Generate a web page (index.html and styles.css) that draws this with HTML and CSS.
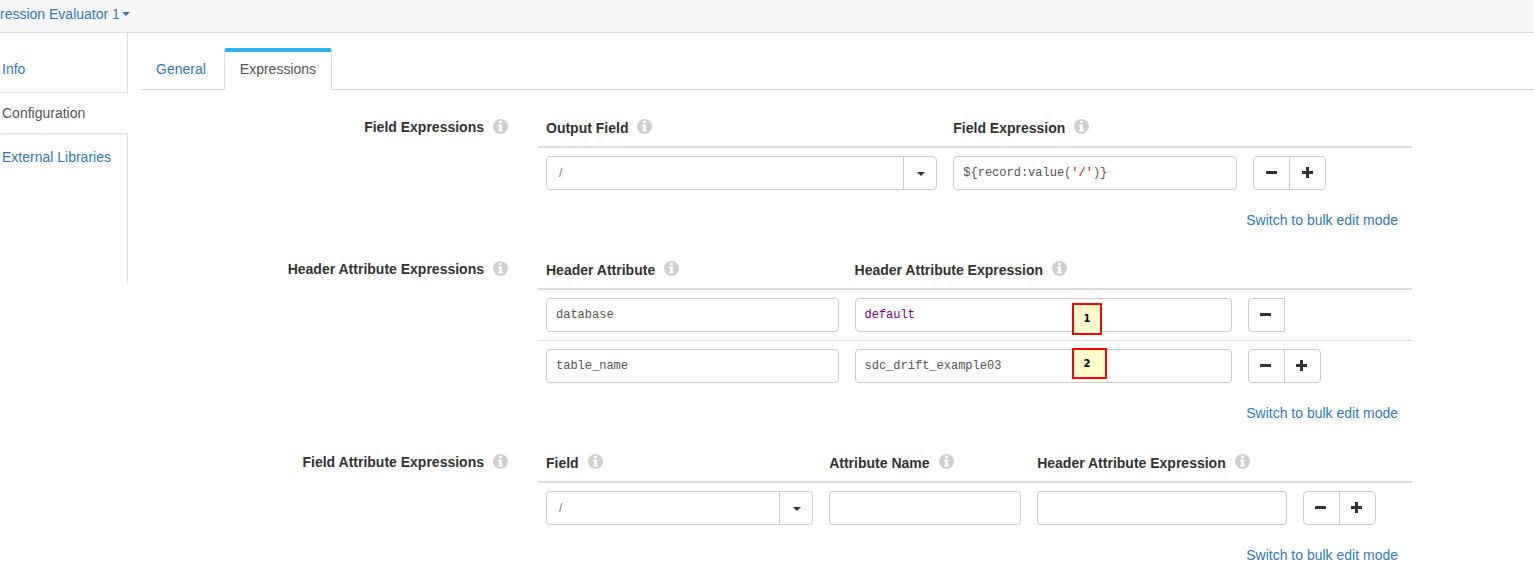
FILE: index.html
```html
<!DOCTYPE html>
<html lang="en">
<head>
<meta charset="utf-8">
<title>Expression Evaluator 1</title>
<link rel="stylesheet" href="styles.css">
</head>
<body>
<svg class="sprite" aria-hidden="true">
  <symbol id="info" viewBox="0 0 15 15">
    <circle cx="7.5" cy="7.5" r="7.5" fill="#cfcfcf"/>
    <path d="M6 1.8h2.8v2.1H6zM5.1 5.5h3.7v5.2H10v1.9H5.1v-1.9h1.2V7.4H5.1z" fill="#fff"/>
  </symbol>
  <symbol id="minus" viewBox="0 0 12 12"><rect x="0" y="4" width="11" height="3" rx=".6" fill="#333"/></symbol>
  <symbol id="plus" viewBox="0 0 12 12"><path d="M4 0h3v4h4v3H7v4H4V7H0V4h4z" fill="#333"/></symbol>
</svg>

<header class="topbar">
  <a href="#" class="stage-link">ression Evaluator 1<span class="caret"></span></a>
</header>

<div class="layout">
  <nav class="sidebar">
    <a href="#" class="side-item">Info</a>
    <a href="#" class="side-item active">Configuration</a>
    <a href="#" class="side-item">External Libraries</a>
  </nav>

  <main class="content">
    <nav class="tabs">
      <a href="#" class="tab">General</a>
      <a href="#" class="tab active">Expressions</a>
    </nav>

    <form class="form">
      <section class="group">
        <h2 class="group-label">Field Expressions<svg class="info"><use href="#info"/></svg></h2>
        <div class="group-body">
          <table class="grid fields">
            <colgroup><col class="c1"><col class="c2"><col></colgroup>
            <thead><tr>
              <th>Output Field<svg class="info"><use href="#info"/></svg></th>
              <th>Field Expression<svg class="info"><use href="#info"/></svg></th>
              <th></th>
            </tr></thead>
            <tbody><tr>
              <td><div class="combo"><select class="control" aria-label="Output Field"><option>/</option></select><span class="combo-arrow"><span class="caret"></span></span></div></td>
              <td><div class="control code" role="textbox" contenteditable="true" aria-label="Field Expression">${record:value(<span class="string">'/'</span>)}</div></td>
              <td><div class="buttons"><button type="button" class="btn" aria-label="Remove"><svg><use href="#minus"/></svg></button><button type="button" class="btn" aria-label="Add"><svg><use href="#plus"/></svg></button></div></td>
            </tr></tbody>
          </table>
          <a href="#" class="bulk">Switch to bulk edit mode</a>
        </div>
      </section>

      <section class="group">
        <h2 class="group-label">Header Attribute Expressions<svg class="info"><use href="#info"/></svg></h2>
        <div class="group-body">
          <table class="grid headers">
            <colgroup><col class="c1"><col class="c2"><col></colgroup>
            <thead><tr>
              <th>Header Attribute<svg class="info"><use href="#info"/></svg></th>
              <th>Header Attribute Expression<svg class="info"><use href="#info"/></svg></th>
              <th></th>
            </tr></thead>
            <tbody>
              <tr>
                <td><input class="control code" aria-label="Header Attribute" value="database"></td>
                <td><div class="marked"><input class="control code keyword" aria-label="Header Attribute Expression" value="default"><span class="marker first">1</span></div></td>
                <td><div class="buttons"><button type="button" class="btn" aria-label="Remove"><svg><use href="#minus"/></svg></button></div></td>
              </tr>
              <tr>
                <td><input class="control code" aria-label="Header Attribute" value="table_name"></td>
                <td><div class="marked"><input class="control code" aria-label="Header Attribute Expression" value="sdc_drift_example03"><span class="marker second">2</span></div></td>
                <td><div class="buttons"><button type="button" class="btn" aria-label="Remove"><svg><use href="#minus"/></svg></button><button type="button" class="btn" aria-label="Add"><svg><use href="#plus"/></svg></button></div></td>
              </tr>
            </tbody>
          </table>
          <a href="#" class="bulk">Switch to bulk edit mode</a>
        </div>
      </section>

      <section class="group">
        <h2 class="group-label">Field Attribute Expressions<svg class="info"><use href="#info"/></svg></h2>
        <div class="group-body">
          <table class="grid attributes">
            <colgroup><col class="c1"><col class="c2"><col class="c3"><col></colgroup>
            <thead><tr>
              <th>Field<svg class="info"><use href="#info"/></svg></th>
              <th>Attribute Name<svg class="info"><use href="#info"/></svg></th>
              <th>Header Attribute Expression<svg class="info"><use href="#info"/></svg></th>
              <th></th>
            </tr></thead>
            <tbody><tr>
              <td><div class="combo"><select class="control" aria-label="Field"><option>/</option></select><span class="combo-arrow"><span class="caret"></span></span></div></td>
              <td><input class="control code" aria-label="Attribute Name"></td>
              <td><input class="control code" aria-label="Header Attribute Expression"></td>
              <td><div class="buttons"><button type="button" class="btn" aria-label="Remove"><svg><use href="#minus"/></svg></button><button type="button" class="btn" aria-label="Add"><svg><use href="#plus"/></svg></button></div></td>
            </tr></tbody>
          </table>
          <a href="#" class="bulk">Switch to bulk edit mode</a>
        </div>
      </section>
    </form>
  </main>
</div>
</body>
</html>
```
FILE: styles.css
```css
* { box-sizing: border-box; }

body {
  margin: 0;
  background: #fff;
  color: #333;
  font: 14px/20px "Liberation Sans", Arial, sans-serif;
}

a { color: #337ab7; text-decoration: none; }

.sprite { display: none; }

.topbar {
  padding: 4px 0 8px;
  background: #f7f7f7;
  border-bottom: 1px solid #ddd;
}

.stage-link { display: flex; align-items: center; gap: 2px; }

.caret {
  border: 4px solid transparent;
  border-top-color: currentColor;
  border-bottom: 0;
}

.layout { display: flex; align-items: flex-start; }

.sidebar {
  flex: none;
  display: flex;
  flex-direction: column;
  width: 128px;
  min-height: 250px;
  padding-top: 16px;
  background: linear-gradient(#ddd, #ddd) right / 1px 100% no-repeat;
}

.side-item { padding: 10px 2px 14px; }

.side-item.active {
  padding: 10px 2px;
  background: #fff;
  border: solid #ddd;
  border-width: 1px 0;
  color: #555;
  box-shadow: 0 2px 2px -1px #eee;
}

.side-item.active + .side-item { padding-top: 13px; }

.side-item:first-child { padding-bottom: 13px; }

.content { flex: 1; min-width: 0; padding: 15px 0 0 12px; }

.tabs { display: flex; border-bottom: 1px solid #ddd; }

.tab { padding: 11px 18px 10px 16px; }

.tab.active {
  margin-bottom: -1px;
  padding: 7px 15px 11px;
  background: #fff;
  border: 1px solid #ddd;
  border-top: 4px solid #2fb5e8;
  border-bottom: 0;
  border-radius: 3px 3px 0 0;
  color: #555;
}

.form { padding: 20px 122px 0 0; }

.group { display: grid; grid-template-columns: 368px 1fr; gap: 30px; margin-bottom: 22px; }

.group-label {
  display: flex;
  justify-content: flex-end;
  align-items: flex-start;
  margin: 0;
  padding-top: 7px;
  font-size: 14px;
  line-height: 20px;
}

.info { width: 15px; height: 15px; margin-left: 9px; vertical-align: -1px; }

.group-label .info { margin-top: 2px; }

.group-body { display: flex; flex-direction: column; min-width: 0; }

.grid { width: 100%; table-layout: fixed; border-collapse: separate; border-spacing: 0; }

.grid th { height: 38px; padding: 8px; border-bottom: 2px solid #ddd; text-align: left; white-space: nowrap; }

.grid td { padding: 8px; vertical-align: top; }

.grid tr + tr td { border-top: 1px solid #ddd; }

.fields .c1 { width: 46.6%; }
.fields .c2 { width: 34.3%; }
.headers .c1 { width: 35.3%; }
.headers .c2 { width: 45%; }
.attributes .c1 { width: 32.4%; }
.attributes .c2 { width: 23.8%; }
.attributes .c3 { width: 30.4%; }

.control {
  display: block;
  width: 100%;
  height: 34px;
  padding: 6px 12px;
  appearance: none;
  background: #fff;
  border: 1px solid #ccc;
  border-radius: 4px;
  color: #777;
  font: 12px/20px "Liberation Sans", Arial, sans-serif;
}

.control.code { padding: 6px 9px; color: #555; font-family: "Liberation Mono", "Courier New", monospace; }

.control.keyword { color: #708; }

.string { color: #a11; }

.combo, .marked { position: relative; }

.combo-arrow {
  position: absolute;
  inset: 0 0 0 auto;
  display: flex;
  align-items: center;
  justify-content: center;
  width: 34px;
  padding-top: 2px;
  border-left: 1px solid #ccc;
  color: #333;
  pointer-events: none;
}

.buttons { display: flex; }

.btn {
  display: flex;
  align-items: center;
  justify-content: center;
  width: 37px;
  height: 34px;
  padding: 0;
  background: #fff;
  border: 1px solid #ccc;
}

.btn svg { width: 12px; height: 12px; }

.btn:first-child { border-radius: 4px 0 0 4px; }

.btn + .btn { margin-left: -1px; border-radius: 0 4px 4px 0; }

.marker {
  position: absolute;
  left: 217px;
  padding: 3px 15px 3px 10px;
  background: #ffc;
  border: 2px solid #f00;
  color: #000;
  font: bold 10px/21px "DejaVu Sans", sans-serif;
}

.marker.first { top: 5px; padding: 3px 10px 4px; }

.marker.second { top: -1px; }

.bulk { align-self: flex-end; margin: 12px 14px 0 0; }
```
